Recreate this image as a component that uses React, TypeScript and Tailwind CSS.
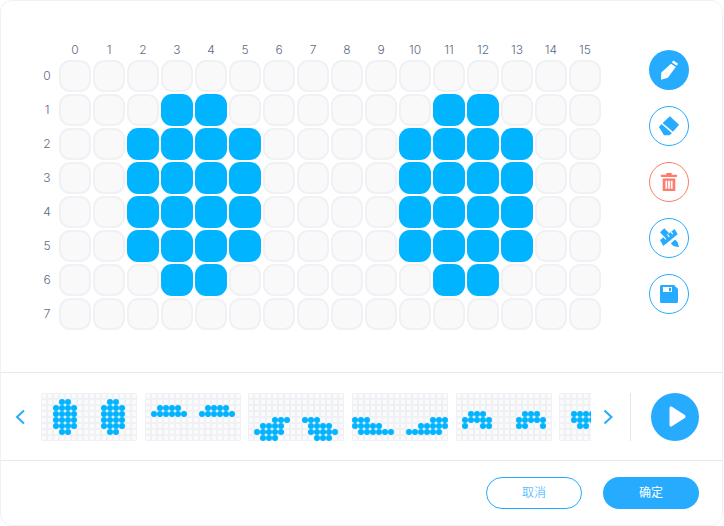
const COLS = Array.from({ length: 16 }, (_, i) => i);
const ROWS = Array.from({ length: 8 }, (_, i) => i);

// each frame: row -> list of lit columns
const eyes: Record<number, number[]> = {
  1: [3, 4, 11, 12],
  2: [2, 3, 4, 5, 10, 11, 12, 13],
  3: [2, 3, 4, 5, 10, 11, 12, 13],
  4: [2, 3, 4, 5, 10, 11, 12, 13],
  5: [2, 3, 4, 5, 10, 11, 12, 13],
  6: [3, 4, 11, 12],
};

const frames: Record<number, number[]>[] = [
  eyes,
  {
    2: [2, 3, 4, 5, 10, 11, 12, 13],
    3: [1, 2, 3, 4, 5, 6, 9, 10, 11, 12, 13, 14],
  },
  {
    4: [4, 5, 6, 9, 10, 11],
    5: [2, 3, 4, 5, 10, 11, 12, 13],
    6: [1, 2, 3, 4, 5, 10, 11, 12, 13, 14],
    7: [2, 3, 4, 11, 12, 13],
  },
  {
    4: [0, 1, 2, 13, 14, 15],
    5: [0, 1, 2, 3, 4, 11, 12, 13, 14, 15],
    6: [1, 2, 3, 4, 5, 6, 9, 10, 11, 12, 13, 14],
  },
  {
    3: [2, 3, 4, 11, 12, 13],
    4: [1, 2, 3, 4, 5, 10, 11, 12, 13, 14],
    5: [1, 4, 5, 10, 11, 14],
  },
  {
    3: [2, 3, 4, 5],
    4: [2, 3, 4, 5],
    5: [3, 4],
  },
];

function Thumb({ frame }: { frame: Record<number, number[]> }) {
  return (
    <div className="shrink-0 w-[96px] h-[48px] grid grid-cols-[repeat(16,6px)] grid-rows-[repeat(8,6px)] bg-[#f0f1f5] rounded-[2px]">
      {ROWS.map((r) =>
        COLS.map((c) =>
          frame[r]?.includes(c) ? (
            <div key={`${r}-${c}`} className="w-[6px] h-[6px] rounded-full bg-[#00b4ff]" />
          ) : (
            <div key={`${r}-${c}`} className="m-[1px] w-[4px] h-[4px] rounded-[1px] bg-[#fbfbfb]" />
          )
        )
      )}
    </div>
  );
}

function ToolButton({ active, red, children }: { active?: boolean; red?: boolean; children: React.ReactNode }) {
  return (
    <button
      className={
        active
          ? "w-10 h-10 rounded-full flex items-center justify-center bg-[#26abff]"
          : red
          ? "w-10 h-10 rounded-full flex items-center justify-center bg-white border border-[#ff7b6b]"
          : "w-10 h-10 rounded-full flex items-center justify-center bg-white border border-[#26abff]"
      }
    >
      {children}
    </button>
  );
}

export default function App() {
  return (
    <div className="w-[724px] h-[526px] bg-white font-['Inter','Noto_Sans_CJK_SC',sans-serif]">
      <div className="w-[723px] h-[526px] bg-white rounded-[12px] border border-[#f0f1f4] flex flex-col">
        {/* Editor */}
        <div className="h-[371px] flex">
          <div className="pl-[36px] pt-[39px]">
            <div className="flex pl-[22px] h-[20px] gap-[2px]">
              {COLS.map((c) => (
                <div key={c} className="w-[32px] text-center text-[12px] leading-[20px] font-light text-[#5b6b85]">
                  {c}
                </div>
              ))}
            </div>
            <div className="flex flex-col gap-[2px]">
              {ROWS.map((r) => (
                <div key={r} className="flex items-center gap-[2px]">
                  <div className="w-[20px] text-center text-[12px] font-light text-[#5b6b85]">{r}</div>
                  {COLS.map((c) =>
                    eyes[r]?.includes(c) ? (
                      <div key={c} className="w-[32px] h-[32px] rounded-[11px] bg-[#00b4ff]" />
                    ) : (
                      <div key={c} className="w-[32px] h-[32px] rounded-[11px] bg-[#f9f9f9] border-2 border-[#f0f1f5]" />
                    )
                  )}
                </div>
              ))}
            </div>
          </div>
          <div className="ml-[48px] pt-[49px] flex flex-col gap-[16px]">
            <ToolButton active>
              <svg width="24" height="24" viewBox="0 0 24 24" fill="#fff">
                <path d="M16.300 2.500l4.800 3.300-1.400 2-4.800-3.300z" />
                <path d="M14 5.700l4.800 3.300-8 10.800-6.800 2 .3-7.200z" />
              </svg>
            </ToolButton>
            <ToolButton>
              <svg width="22" height="22" viewBox="0 0 24 24" fill="#26abff">
                <path d="M13 1.300l10 9.400-6.700 7.500L5 8.600z" />
                <path d="M3.900 9.900l11.400 10L12.300 22H6.500L1 13z" />
              </svg>
            </ToolButton>
            <ToolButton red>
              <svg width="18" height="20" viewBox="0 0 20 22" fill="#ff7b6b">
                <path d="M7 1h6v2h6v2.500H1V3h6z" />
                <path fillRule="evenodd" d="M3 7h14v14H3zM6 9.500v9h2v-9zM9 9.500v9h2v-9zM12 9.500v9h2v-9z" />
              </svg>
            </ToolButton>
            <ToolButton>
              <svg width="24" height="24" viewBox="0 0 24 24" fill="#26abff">
                <path d="M3 6.300l4.300-4L12 7l-4.500 4z" />
                <path d="M18 13.500l2.500 2.500 1.500 5.300-5.500-1.300-2.700-2.500z" />
                <path d="M17.700 3l3 5.300L6.300 20 3 14z" />
                <path d="M7 11l1.800 2.400M10.500 8.500l1.800 2.400M14 5.800l1.800 2.400" stroke="#fff" strokeWidth="1.200" fill="none" />
              </svg>
            </ToolButton>
            <ToolButton>
              <svg width="20" height="20" viewBox="0 0 20 20">
                <path fill="#26abff" d="M2.500 1H15l4 4v12.500a1.500 1.500 0 0 1-1.500 1.500h-15A1.500 1.500 0 0 1 1 17.500v-15A1.500 1.500 0 0 1 2.500 1z" />
                <path fill="#fff" d="M4 3h9v5H4z" />
                <path fill="#26abff" d="M10 3.800h2v3.400h-2z" />
              </svg>
            </ToolButton>
          </div>
        </div>

        {/* Frame strip */}
        <div className="h-[88px] border-t border-[#e3e8ef] flex items-center pl-[12px]">
          <svg width="14" height="20" viewBox="0 0 14 20" fill="none" stroke="#26abff" strokeWidth="2">
            <path d="M11 3.500L4 10l7 6.500" />
          </svg>
          <div className="ml-[14px] w-[550px] flex gap-[7.700px] overflow-hidden">
            {frames.map((f, i) => (
              <Thumb key={i} frame={f} />
            ))}
          </div>
          <svg width="14" height="20" viewBox="0 0 14 20" fill="none" stroke="#26abff" strokeWidth="2" className="ml-[10px]">
            <path d="M3.500 3.500L10.500 10l-7 6.500" />
          </svg>
          <div className="ml-[15px] w-px h-[48px] bg-[#e3e8ef]" />
          <button className="ml-[20px] w-[48px] h-[48px] rounded-full bg-[#26abff] flex items-center justify-center">
            <svg width="17" height="21" viewBox="0 0 17 21" fill="#fff" className="ml-[5px]">
              <path d="M0.500 2c0-1.300 1.300-2 2.400-1.300L15.800 9c1 .7 1 2.300 0 3L2.900 20.300C1.800 21 .5 20.300.5 19z" />
            </svg>
          </button>
        </div>

        {/* Footer */}
        <div className="border-t border-[#e3e8ef] flex-1 flex justify-end items-start pt-[16px] pr-[23px] gap-[21px]">
          <button className="w-[96px] h-[32px] rounded-full border border-[#26abff] text-[#26abff] text-[12px] font-light bg-white">
            取消
          </button>
          <button className="w-[96px] h-[32px] rounded-full bg-[#26abff] text-white text-[12px]">确定</button>
        </div>
      </div>
    </div>
  );
}
